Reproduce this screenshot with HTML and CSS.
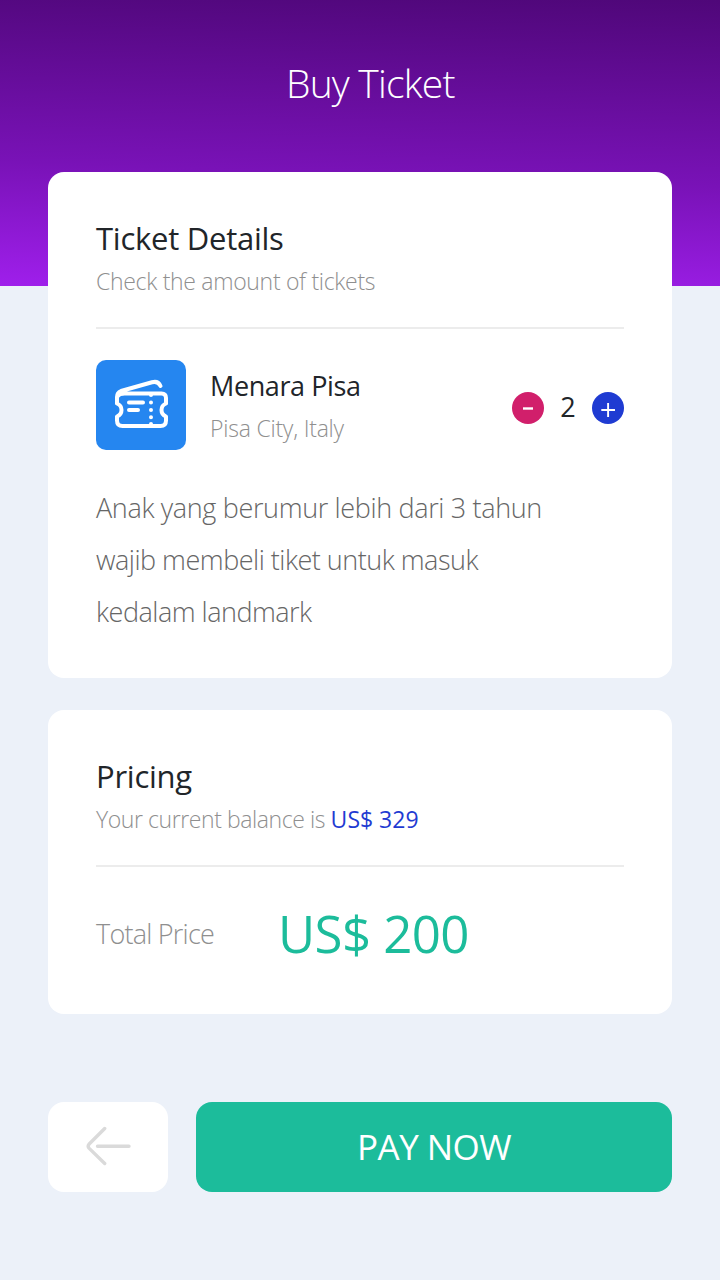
FILE: index.html
```html
<!DOCTYPE html>
<html lang="id">
<head>
<meta charset="utf-8">
<title>Buy Ticket</title>
<link rel="stylesheet" href="styles.css">
</head>
<body>
<main class="screen">
  <header class="header"><h1 class="title">Buy Ticket</h1></header>

  <section class="card card-details">
    <h2 class="card-title">Ticket Details</h2>
    <p class="card-sub">Check the amount of tickets</p>
    <div class="divider"></div>
    <div class="item">
      <svg class="item-icon" viewBox="0 0 90 90" fill="none" stroke="#fff" stroke-width="4" stroke-linecap="round" stroke-linejoin="round">
        <rect width="90" height="90" rx="10" fill="#2586f0" stroke="none"/>
        <path d="M26 33.500H65.500Q70 33.500 70 38V43.500C64 46 64 54 70 56.500V60.500Q70 66 64.500 66H26.500Q21 66 21 60.500V56.500C27 54 27 46 21 43.500V37Q21 32.500 25 31L56 22.300Q62 20.500 64.500 26"/>
        <path d="M22 36Q23.500 33.500 27 33.500M33 42.500H47M33 50H42"/>
        <path d="M55 35V35.010M55 42.500V42.510M55 50V50.010M55 57.300V57.310M55 64V64.010"/>
      </svg>
      <div class="item-text">
        <p class="item-name">Menara Pisa</p>
        <p class="item-place">Pisa City, Italy</p>
      </div>
      <div class="stepper">
        <button class="step step-minus" aria-label="Kurangi"><svg viewBox="0 0 32 32"><path d="M11 16.500H21" stroke="#fff" stroke-width="2.400"/></svg></button>
        <span class="count">2</span>
        <button class="step step-plus" aria-label="Tambah"><svg viewBox="0 0 32 32"><path d="M9.300 18H23M16.100 11V25" stroke="#fff" stroke-width="1.900"/></svg></button>
      </div>
    </div>
    <p class="note"><span class="note-first">Anak yang berumur lebih dari 3 tahun</span><br>wajib membeli tiket untuk masuk<br>kedalam landmark</p>
  </section>

  <section class="card card-pricing">
    <h2 class="card-title">Pricing</h2>
    <p class="card-sub card-sub-balance">Your current balance is <span class="balance">US$ 329</span></p>
    <div class="divider"></div>
    <div class="total">
      <span class="total-label">Total Price</span>
      <span class="total-value">US$ 200</span>
    </div>
  </section>

  <footer class="actions">
    <button class="back" aria-label="Kembali">
      <svg viewBox="0 0 46 40" fill="none" stroke="#dadada" stroke-width="3.400" stroke-linecap="round" stroke-linejoin="round"><path d="M18.700 2.500L3.200 18Q1.200 20.200 3.200 22.400L18.700 37.500M11.500 20.200H43"/></svg>
    </button>
    <button class="pay">PAY NOW</button>
  </footer>
</main>
</body>
</html>
```
FILE: styles.css
```css
* { box-sizing: border-box; margin: 0; padding: 0; }
body { background: #ecf1f9; font-family: "Open Sans", "Noto Sans", sans-serif; color: #212529; }
button { border: 0; font-family: inherit; }
svg { display: block; }
.screen { display: flex; flex-direction: column; width: 720px; height: 1280px; padding: 0 48px; overflow: hidden; }
.header { flex: none; height: 286px; margin: 0 -48px -114px; padding-top: 55px; background: linear-gradient(182deg, #4f0779 0%, #7912b7 60%, #9f1feb 100%); }
.title { padding-left: 286px; color: #fff; font-size: 39px; font-weight: 300; line-height: 56px; letter-spacing: -0.8px; white-space: nowrap; }
.card { flex: none; padding: 45px 48px 0; border-radius: 16px; background: #fff; white-space: nowrap; }
.card-details { height: 506px; }
.card-pricing { height: 304px; margin-top: 32px; }
.card-title { font-size: 31px; font-weight: 380; line-height: 42px; letter-spacing: -0.25px; }
.card-sub { height: 44px; font-size: 23px; font-weight: 300; line-height: 44px; letter-spacing: -0.31px; color: #8f8f8f; }
.card-sub-balance { letter-spacing: -0.42px; }
.balance { color: #1f3bd2; font-weight: 380; letter-spacing: 0; }
.divider { height: 2px; margin-top: 24px; background: #ececec; }
.item { display: flex; align-items: center; height: 90px; margin-top: 31px; }
.item-icon { flex: none; width: 90px; height: 90px; margin-right: 24px; }
.item-text { flex: 1; padding-top: 3px; }
.item-name { font-size: 27px; font-weight: 380; line-height: 42px; letter-spacing: -0.4px; }
.item-place { font-size: 23px; font-weight: 300; line-height: 42px; letter-spacing: -0.23px; color: #8f8f8f; }
.stepper { display: flex; align-items: center; padding-top: 5px; }
.step { width: 32px; height: 32px; border-radius: 50%; }
.step-minus { background: #d11f6b; }
.step-plus { background: #1f3bd2; }
.count { width: 48px; padding-bottom: 2px; font-size: 27px; font-weight: 380; line-height: 32px; text-align: center; }
.note { margin-top: 32px; font-size: 27px; font-weight: 300; line-height: 52px; letter-spacing: -0.5px; color: #666; }
.note-first { letter-spacing: -0.35px; }
.total { display: flex; align-items: center; height: 76px; margin-top: 28px; }
.total-label { width: 182px; font-size: 27px; font-weight: 300; letter-spacing: -0.77px; color: #8f8f8f; }
.total-value { font-size: 51px; letter-spacing: -0.6px; color: #1cbc9b; }
.actions { display: flex; flex: none; gap: 28px; height: 90px; margin-top: 88px; }
.back { display: flex; align-items: center; justify-content: center; padding: 0 0 2px 1px; width: 120px; border-radius: 16px; background: #fff; }
.back svg { width: 46px; height: 40px; }
.pay { flex: 1; padding-bottom: 2px; border-radius: 16px; background: #1cbc9b; color: #fff; font-size: 35px; letter-spacing: -0.55px; }
```
